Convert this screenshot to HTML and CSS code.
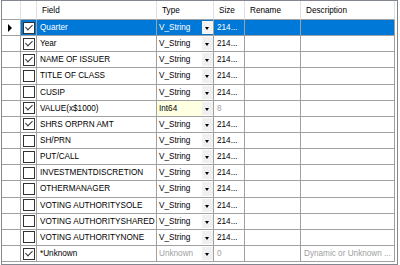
FILE: index.html
```html
<!DOCTYPE html>
<html>
<head>
<meta charset="utf-8">
<link rel="stylesheet" href="styles.css">
</head>
<body>
<div class="grid">
  <div class="hc rh"></div><div class="hc"></div><div class="hc">Field</div><div class="hc">Type</div><div class="hc">Size</div><div class="hc">Rename</div><div class="hc">Description</div>

  <div class="c rh"><span class="arrow"></span></div>
  <div class="c ck sel"><span class="box on"></span></div>
  <div class="c sel">Quarter</div>
  <div class="c ty sel"><span class="tv">V_String</span><span class="dd"></span></div>
  <div class="c sel">214...</div>
  <div class="c sel"></div>
  <div class="c sel"></div>

  <div class="c rh"></div><div class="c ck"><span class="box on"></span></div><div class="c">Year</div><div class="c ty"><span class="tv">V_String</span><span class="dd"></span></div><div class="c">214...</div><div class="c"></div><div class="c"></div>

  <div class="c rh"></div><div class="c ck"><span class="box on"></span></div><div class="c">NAME OF ISSUER</div><div class="c ty"><span class="tv">V_String</span><span class="dd"></span></div><div class="c">214...</div><div class="c"></div><div class="c"></div>

  <div class="c rh"></div><div class="c ck"><span class="box"></span></div><div class="c">TITLE OF CLASS</div><div class="c ty"><span class="tv">V_String</span><span class="dd"></span></div><div class="c">214...</div><div class="c"></div><div class="c"></div>

  <div class="c rh"></div><div class="c ck"><span class="box"></span></div><div class="c">CUSIP</div><div class="c ty"><span class="tv">V_String</span><span class="dd"></span></div><div class="c">214...</div><div class="c"></div><div class="c"></div>

  <div class="c rh"></div><div class="c ck"><span class="box on"></span></div><div class="c">VALUE(x$1000)</div><div class="c ty"><span class="tv yel">Int64</span><span class="dd"></span></div><div class="c dim">8</div><div class="c"></div><div class="c"></div>

  <div class="c rh"></div><div class="c ck"><span class="box on"></span></div><div class="c">SHRS ORPRN AMT</div><div class="c ty"><span class="tv">V_String</span><span class="dd"></span></div><div class="c">214...</div><div class="c"></div><div class="c"></div>

  <div class="c rh"></div><div class="c ck"><span class="box"></span></div><div class="c">SH/PRN</div><div class="c ty"><span class="tv">V_String</span><span class="dd"></span></div><div class="c">214...</div><div class="c"></div><div class="c"></div>

  <div class="c rh"></div><div class="c ck"><span class="box"></span></div><div class="c">PUT/CALL</div><div class="c ty"><span class="tv">V_String</span><span class="dd"></span></div><div class="c">214...</div><div class="c"></div><div class="c"></div>

  <div class="c rh"></div><div class="c ck"><span class="box"></span></div><div class="c">INVESTMENTDISCRETION</div><div class="c ty"><span class="tv">V_String</span><span class="dd"></span></div><div class="c">214...</div><div class="c"></div><div class="c"></div>

  <div class="c rh"></div><div class="c ck"><span class="box"></span></div><div class="c">OTHERMANAGER</div><div class="c ty"><span class="tv">V_String</span><span class="dd"></span></div><div class="c">214...</div><div class="c"></div><div class="c"></div>

  <div class="c rh"></div><div class="c ck"><span class="box"></span></div><div class="c">VOTING AUTHORITYSOLE</div><div class="c ty"><span class="tv">V_String</span><span class="dd"></span></div><div class="c">214...</div><div class="c"></div><div class="c"></div>

  <div class="c rh"></div><div class="c ck"><span class="box"></span></div><div class="c">VOTING AUTHORITYSHARED</div><div class="c ty"><span class="tv">V_String</span><span class="dd"></span></div><div class="c">214...</div><div class="c"></div><div class="c"></div>

  <div class="c rh"></div><div class="c ck"><span class="box"></span></div><div class="c">VOTING AUTHORITYNONE</div><div class="c ty"><span class="tv">V_String</span><span class="dd"></span></div><div class="c">214...</div><div class="c"></div><div class="c"></div>

  <div class="c rh"></div><div class="c ck"><span class="box on"></span></div><div class="c">*Unknown</div><div class="c ty"><span class="tv dim">Unknown</span><span class="dd"></span></div><div class="c dim">0</div><div class="c"></div><div class="c dim">Dynamic or Unknown ...</div>
</div>
</body>
</html>
```

FILE: styles.css
```css
html, body {
  margin: 0;
  padding: 0;
  background: #ffffff;
}
.grid {
  margin-left: 1px;
  width: 397px;
  height: 265px;
  box-sizing: border-box;
  border: 1px solid #828790;
  display: grid;
  grid-template-columns: 19px 16px 120px 57px 31px 56px 94px;
  grid-template-rows: 19px;
  grid-auto-rows: 16.15px;
  overflow: hidden;
  font-family: "Liberation Sans", Arial, sans-serif;
  font-size: 8.2px;
  color: #000;
}
.hc, .c {
  box-sizing: border-box;
  border-right: 1px solid #a0a0a0;
  border-bottom: 1px solid #a0a0a0;
  padding-left: 3px;
  display: flex;
  align-items: center;
  white-space: nowrap;
  overflow: hidden;
  background: #fff;
}
.hc {
  border-right-color: #e0e0e0;
  padding-left: 5px;
}
.rh {
  padding-left: 0;
  justify-content: center;
}
.arrow {
  width: 0;
  height: 0;
  border-top: 4px solid transparent;
  border-bottom: 4px solid transparent;
  border-left: 4px solid #000;
  margin-left: -2px;
}
.ck {
  padding-left: 0;
  justify-content: center;
}
.box {
  width: 12px;
  height: 12px;
  box-sizing: border-box;
  border: 1px solid #333;
  background: #fff;
  position: relative;
}
.box.on::after {
  content: "";
  position: absolute;
  left: 3px;
  top: 0px;
  width: 3px;
  height: 6px;
  border-right: 1.3px solid #333;
  border-bottom: 1.3px solid #333;
  transform: rotate(45deg);
}
.sel {
  background: #0078d7;
  color: #fff;
}
.ty {
  padding-left: 0;
  justify-content: space-between;
}
.tv {
  flex: 1;
  align-self: stretch;
  display: flex;
  align-items: center;
  padding-left: 2px;
}
.tv.yel {
  background: #ffffe1;
}
.dd {
  width: 11px;
  align-self: stretch;
  margin: 1px 0;
  background: #f0f0f0;
  position: relative;
}
.dd::after {
  content: "";
  position: absolute;
  left: 3px;
  top: 6px;
  border-left: 2.5px solid transparent;
  border-right: 2.5px solid transparent;
  border-top: 3px solid #000;
}
.sel .dd {
  background: #f4f4f4;
}
.dim {
  color: #a0a0a0;
}
```
